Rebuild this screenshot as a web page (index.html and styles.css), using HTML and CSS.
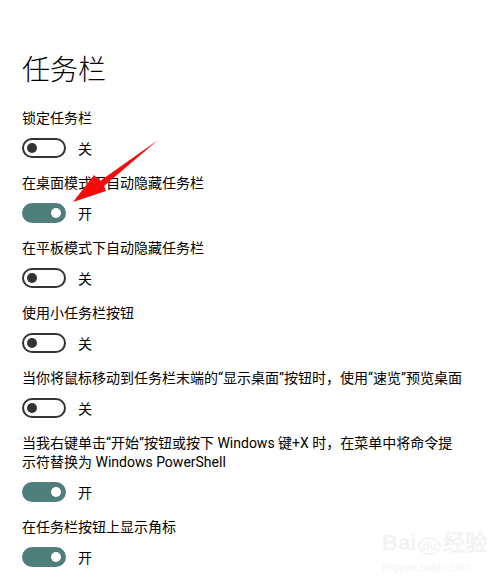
FILE: index.html
```html
<!DOCTYPE html>
<html lang="zh-CN">
<head>
  <meta charset="UTF-8" />
  <meta name="viewport" content="width=device-width, initial-scale=1.0"/>
  <title>任务栏</title>
  <link rel="stylesheet" href="styles.css">
</head>
<body>

  <div class="page">
    <h1 class="title">任务栏</h1>

    <div class="setting">
      <div class="label">锁定任务栏</div>
      <div class="switch-row"><span class="switch"></span><span class="state">关</span></div>
    </div>

    <div class="setting">
      <div class="label">在桌面模式下自动隐藏任务栏</div>
      <div class="switch-row"><span class="switch on"></span><span class="state">开</span></div>
    </div>

    <div class="setting">
      <div class="label">在平板模式下自动隐藏任务栏</div>
      <div class="switch-row"><span class="switch"></span><span class="state">关</span></div>
    </div>

    <div class="setting">
      <div class="label">使用小任务栏按钮</div>
      <div class="switch-row"><span class="switch"></span><span class="state">关</span></div>
    </div>

    <div class="setting">
      <div class="label">当你将鼠标移动到任务栏末端的“显示桌面”按钮时，使用“速览”预览桌面</div>
      <div class="switch-row"><span class="switch"></span><span class="state">关</span></div>
    </div>

    <div class="setting">
      <div class="label">当我右键单击“开始”按钮或按下 Windows 键+X 时，在菜单中将命令提示符替换为 Windows PowerShell</div>
      <div class="switch-row"><span class="switch on"></span><span class="state">开</span></div>
    </div>

    <div class="setting">
      <div class="label">在任务栏按钮上显示角标</div>
      <div class="switch-row"><span class="switch on"></span><span class="state">开</span></div>
    </div>
  </div>

  <!-- red annotation arrow -->
  <svg class="arrow" width="500" height="586" viewBox="0 0 500 586">
    <polygon points="158,140 100,181 94,175 73,202 106,191 104,186" fill="#f50a0a"/>
  </svg>

  <div class="watermark">
    <div class="wm-logo">Bai<span class="wm-du">du</span>经验</div>
    <div class="wm-url">jingyan.baidu.com</div>
  </div>

</body>
</html>
```

FILE: styles.css
```css
body {
  font-family: Roboto, "Noto Sans CJK SC", sans-serif;
  margin: 0;
  padding: 0;
  background: #ffffff;
  color: #000000;
}

.page {
  padding: 51px 22px 0;
  width: 442px;
}

.title {
  font-size: 28px;
  font-weight: 300;
  line-height: 40px;
  margin: 0 0 18px;
}

.setting {
  margin-bottom: 16px;
}

.label {
  font-size: 14px;
  line-height: 19px;
  margin-bottom: 10px;
}

.switch-row {
  display: flex;
  align-items: center;
  height: 20px;
}

.switch {
  box-sizing: border-box;
  width: 44px;
  height: 20px;
  border: 2px solid #333333;
  border-radius: 10px;
  position: relative;
}

.switch::after {
  content: "";
  position: absolute;
  top: 3px;
  left: 3px;
  width: 10px;
  height: 10px;
  border-radius: 50%;
  background: #333333;
}

.switch.on {
  background: #507f7b;
  border-color: #507f7b;
}

.switch.on::after {
  left: auto;
  right: 3px;
  background: #ffffff;
}

.state {
  font-size: 14px;
  margin-left: 12px;
}

.arrow {
  position: absolute;
  top: 0;
  left: 0;
  pointer-events: none;
}

.watermark {
  position: absolute;
  left: 382px;
  top: 528px;
  color: #f3f3f3;
  font-family: "Liberation Sans", sans-serif;
}

.wm-logo {
  font-size: 22px;
  font-weight: bold;
  line-height: 30px;
}

.wm-du {
  font-size: 12px;
  border: 2px solid #f3f3f3;
  border-radius: 50%;
  padding: 0 2px;
  margin: 0 2px;
}

.wm-url {
  font-size: 11px;
  line-height: 12px;
}
```
